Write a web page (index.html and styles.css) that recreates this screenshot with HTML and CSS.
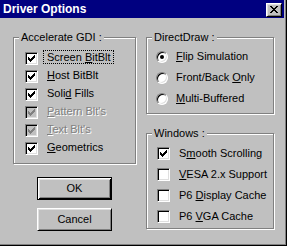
FILE: index.html
```html
<!DOCTYPE html>
<html>
    <head>
        <link rel="stylesheet" href="styles.css">
    </head>
    <body>
        <div class="window">
            <div class="titlebar">
                <span class="title">Driver Options</span>
                <span class="close">
                    <svg width="14" height="12" viewBox="0 0 14 12"><path d="M3 2h2v1H3zM9 2h2v1H9zM4 3h2v1H4zM8 3h2v1H8zM5 4h4v1H5zM6 5h2v1H6zM5 6h4v1H5zM4 7h2v1H4zM8 7h2v1H8zM3 8h2v1H3zM9 8h2v1H9z" fill="#000"/></svg>
                </span>
            </div>

            <div class="content">
                <div class="col-left">
                    <div class="group gdi">
                        <span class="legend">Accelerate GDI :</span>
                        <div class="row check">
                            <span class="box on"></span>
                            <span class="label focus">Screen <u>B</u>itBlt</span>
                        </div>
                        <div class="row check">
                            <span class="box on"></span>
                            <span class="label"><u>H</u>ost BitBlt</span>
                        </div>
                        <div class="row check">
                            <span class="box on"></span>
                            <span class="label">Soli<u>d</u> Fills</span>
                        </div>
                        <div class="row check">
                            <span class="box on disabled"></span>
                            <span class="label disabled"><u>P</u>attern Blt's</span>
                        </div>
                        <div class="row check">
                            <span class="box on disabled"></span>
                            <span class="label disabled"><u>T</u>ext Blt's</span>
                        </div>
                        <div class="row check">
                            <span class="box on"></span>
                            <span class="label"><u>G</u>eometrics</span>
                        </div>
                    </div>

                    <div class="buttons">
                        <div class="btn default">OK</div>
                        <div class="btn">Cancel</div>
                    </div>
                </div>

                <div class="col-right">
                    <div class="group ddraw">
                        <span class="legend">DirectDraw :</span>
                        <div class="row wide">
                            <span class="radio on"></span>
                            <span class="label"><u>F</u>lip Simulation</span>
                        </div>
                        <div class="row wide">
                            <span class="radio"></span>
                            <span class="label">Front/Back <u>O</u>nly</span>
                        </div>
                        <div class="row wide">
                            <span class="radio"></span>
                            <span class="label"><u>M</u>ulti-Buffered</span>
                        </div>
                    </div>

                    <div class="group win">
                        <span class="legend">Windows :</span>
                        <div class="row wide">
                            <span class="box on"></span>
                            <span class="label">S<u>m</u>ooth Scrolling</span>
                        </div>
                        <div class="row wide">
                            <span class="box"></span>
                            <span class="label"><u>V</u>ESA 2.x Support</span>
                        </div>
                        <div class="row wide">
                            <span class="box"></span>
                            <span class="label">P6 <u>D</u>isplay Cache</span>
                        </div>
                        <div class="row wide">
                            <span class="box"></span>
                            <span class="label">P6 <u>V</u>GA Cache</span>
                        </div>
                    </div>
                </div>
            </div>
        </div>
    </body>
</html>
```

FILE: styles.css
```css
body {
    margin: 0;
    padding: 0;
    background-color: #c0c0c0;
    font-family: "Liberation Sans", Arial, sans-serif;
    font-size: 11px;
    color: #000;
}

.window {
    width: 287px;
    height: 246px;
    box-sizing: border-box;
    padding: 0 2px 2px 0;
    border-right: 1px solid #000;
    border-bottom: 1px solid #000;
    box-shadow: inset -1px -1px #808080;
    background-color: #c0c0c0;
}

/* title bar */
.titlebar {
    display: flex;
    height: 18px;
    background-color: #000080;
}
.title {
    flex: 1;
    padding-left: 3px;
    line-height: 18px;
    font-size: 12px;
    font-weight: bold;
    color: #fff;
}
.close {
    display: block;
    width: 16px;
    height: 14px;
    box-sizing: border-box;
    margin: 3px 2px 0 0;
    border: 1px solid;
    border-color: #fff #000 #000 #fff;
    box-shadow: inset 1px 1px #dfdfdf, inset -1px -1px #808080;
    background-color: #c0c0c0;
}
.close svg { display: block; shape-rendering: crispEdges; }

/* layout */
.content {
    display: flex;
    gap: 10px;
    padding: 19px 0 0 13px;
}
.col-left {
    display: flex;
    flex-direction: column;
    width: 123px;
}
.col-right {
    display: flex;
    flex-direction: column;
    gap: 19px;
    width: 128px;
}

/* etched group boxes */
.group {
    position: relative;
    box-sizing: border-box;
    border: 1px solid #808080;
    box-shadow: 1px 1px #fff, inset 1px 1px #fff;
}
.group.gdi { height: 127px; padding: 12px 0 0 11px; }
.group.ddraw { height: 77px; padding: 10px 0 0 9px; }
.group.win { height: 96px; padding: 11px 0 0 10px; }

.legend {
    position: absolute;
    top: -7px;
    left: 5px;
    padding: 0 2px;
    line-height: 13px;
    background-color: #c0c0c0;
}

/* rows */
.row {
    display: flex;
    align-items: flex-start;
    height: 18px;
}
.row.wide { height: 21px; }

.label {
    margin: 0 0 0 5px;
    padding: 0 2px 0 3px;
    border: 1px solid transparent;
    line-height: 12px;
    white-space: nowrap;
}
.label.focus { border: 1px dotted #000; }
.label.disabled { color: #808080; text-shadow: 1px 1px #fff; }
.row.wide .label { margin-top: 1px; }
.row.wide .radio + .label { margin-top: 1px; margin-left: 4px; }

/* check boxes */
.box {
    position: relative;
    flex: none;
    width: 13px;
    height: 13px;
    box-sizing: border-box;
    margin-top: 2px;
    border: 1px solid;
    border-color: #808080 #fff #fff #808080;
    box-shadow: inset 1px 1px #000, inset -1px -1px #dfdfdf;
    background-color: #fff;
}
.box.disabled { background-color: #c0c0c0; }
.box.on::after {
    content: "";
    position: absolute;
    left: 0;
    top: 0;
    width: 11px;
    height: 11px;
    background: url("data:image/svg+xml,%3Csvg xmlns='http://www.w3.org/2000/svg' width='11' height='11' shape-rendering='crispEdges'%3E%3Cpath d='M2 4h1v3H2zM3 5h1v3H3zM4 6h1v3H4zM5 5h1v3H5zM6 4h1v3H6zM7 3h1v3H7zM8 2h1v3H8z' fill='%23000'/%3E%3C/svg%3E") no-repeat;
}
.box.on.disabled::after {
    background: url("data:image/svg+xml,%3Csvg xmlns='http://www.w3.org/2000/svg' width='11' height='11' shape-rendering='crispEdges'%3E%3Cpath d='M2 4h1v3H2zM3 5h1v3H3zM4 6h1v3H4zM5 5h1v3H5zM6 4h1v3H6zM7 3h1v3H7zM8 2h1v3H8z' fill='%23808080'/%3E%3C/svg%3E") no-repeat;
}

/* radio buttons */
.radio {
    position: relative;
    flex: none;
    width: 12px;
    height: 12px;
    box-sizing: border-box;
    margin-top: 3px;
    border-radius: 50%;
    border: 1px solid;
    border-color: #808080 #fff #fff #808080;
    box-shadow: inset 1px 1px #000, inset -1px -1px #dfdfdf;
    background-color: #fff;
}
.radio.on::after {
    content: "";
    position: absolute;
    left: 3px;
    top: 3px;
    width: 4px;
    height: 4px;
    border-radius: 50%;
    background-color: #000;
}

/* push buttons */
.buttons {
    display: flex;
    flex-direction: column;
    align-items: center;
    gap: 8px;
    margin-top: 13px;
}
.btn {
    width: 75px;
    height: 23px;
    box-sizing: border-box;
    border: 1px solid;
    border-color: #fff #000 #000 #fff;
    box-shadow: inset 1px 1px #dfdfdf, inset -1px -1px #808080;
    text-align: center;
    line-height: 21px;
}
.btn.default {
    border-color: #000;
    box-shadow: inset 1px 1px #fff, inset -1px -1px #000, inset 2px 2px #dfdfdf, inset -2px -2px #808080;
}
```
